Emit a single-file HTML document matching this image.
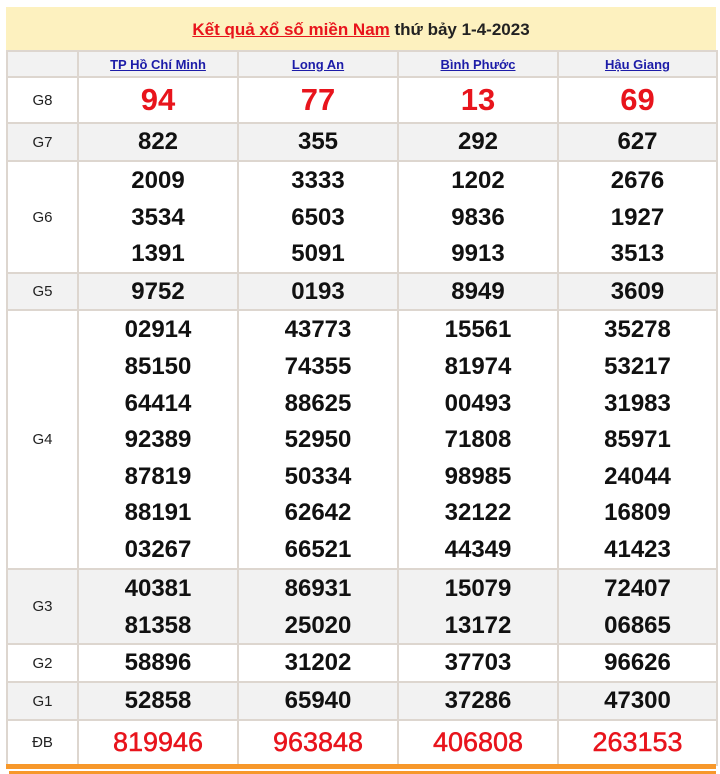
<!DOCTYPE html>
<html><head><meta charset="utf-8"><style>
body{margin:0;background:#fff;width:720px;height:774px;overflow:hidden;font-family:"Liberation Sans",Arial,sans-serif;position:relative}
.title{position:absolute;left:6px;top:7px;width:710px;height:43px;background:#fdf1bf;text-align:center;line-height:45px;font-size:17px;font-weight:bold;color:#222}
.title a{color:#e8141c;text-decoration:underline}
table{position:absolute;left:6px;top:50px;width:710px;border-collapse:collapse;table-layout:fixed}
td{border:2px solid #ddd6cf;text-align:center;padding:0;font-weight:bold;font-size:24px;color:#111}
td.l{font-weight:normal;font-size:15px;color:#222}
tr.g td{background:#f2f2f2}
.h td{background:#f2f2f2;font-size:13px;height:24px}
.h a{color:#1c1ca8;text-decoration:underline}
.big{color:#e8141c;font-size:31px}
.db{color:#e8141c;font-size:27px;font-weight:normal;-webkit-text-stroke:.5px #e8141c}
.m div{height:36.6px;line-height:37.5px}
.bar{position:absolute;left:6px;top:764px;width:710px;height:5px;background:#f7982b}
.bar2{position:absolute;left:9px;top:771px;width:707px;height:3px;background:#f7982b}
</style></head><body>
<div class="title"><a>Kết quả xổ số miền Nam</a> thứ bảy 1-4-2023</div>
<table>
<colgroup><col style="width:71px"><col style="width:160px"><col style="width:160px"><col style="width:160px"><col style="width:159px"></colgroup>
<tr class="h"><td></td><td><a>TP Hồ Chí Minh</a></td><td><a>Long An</a></td><td><a>Bình Phước</a></td><td><a>Hậu Giang</a></td></tr>
<tr style="height:46px"><td class="l">G8</td><td class="big">94</td><td class="big">77</td><td class="big">13</td><td class="big">69</td></tr>
<tr class="g" style="height:38px"><td class="l">G7</td><td>822</td><td>355</td><td>292</td><td>627</td></tr>
<tr class="m" style="height:112px"><td class="l">G6</td><td><div>2009</div><div>3534</div><div>1391</div></td><td><div>3333</div><div>6503</div><div>5091</div></td><td><div>1202</div><div>9836</div><div>9913</div></td><td><div>2676</div><div>1927</div><div>3513</div></td></tr>
<tr class="g" style="height:37px"><td class="l">G5</td><td>9752</td><td>0193</td><td>8949</td><td>3609</td></tr>
<tr class="m" style="height:259px"><td class="l">G4</td>
<td><div>02914</div><div>85150</div><div>64414</div><div>92389</div><div>87819</div><div>88191</div><div>03267</div></td>
<td><div>43773</div><div>74355</div><div>88625</div><div>52950</div><div>50334</div><div>62642</div><div>66521</div></td>
<td><div>15561</div><div>81974</div><div>00493</div><div>71808</div><div>98985</div><div>32122</div><div>44349</div></td>
<td><div>35278</div><div>53217</div><div>31983</div><div>85971</div><div>24044</div><div>16809</div><div>41423</div></td></tr>
<tr class="g m" style="height:73px"><td class="l">G3</td><td><div>40381</div><div>81358</div></td><td><div>86931</div><div>25020</div></td><td><div>15079</div><div>13172</div></td><td><div>72407</div><div>06865</div></td></tr>
<tr style="height:38px"><td class="l">G2</td><td>58896</td><td>31202</td><td>37703</td><td>96626</td></tr>
<tr class="g" style="height:38px"><td class="l">G1</td><td>52858</td><td>65940</td><td>37286</td><td>47300</td></tr>
<tr style="height:45px"><td class="l">ĐB</td><td class="db">819946</td><td class="db">963848</td><td class="db">406808</td><td class="db">263153</td></tr>
</table>
<div class="bar"></div><div class="bar2"></div>
</body></html>
